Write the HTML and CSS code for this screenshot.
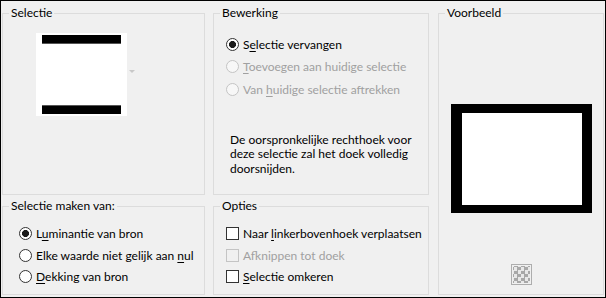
FILE: index.html
```html
<!DOCTYPE html>
<html lang="nl">
<head>
    <meta charset="UTF-8">
    <title>Selectie uit masker</title>
    <link rel="stylesheet" href="styles.css">
</head>
<body>
    <div class="dialog">
        <fieldset class="group source">
            <legend>Selectie</legend>
            <div class="thumb-row">
                <div class="thumb">
                    <div class="bar bar-top"></div>
                    <div class="bar bar-bottom"></div>
                </div>
                <svg class="drop-arrow" width="6" height="4" viewBox="0 0 6 4"><path d="M0 0H6L3 3Z" fill="#c8c8c8"/></svg>
            </div>
        </fieldset>

        <fieldset class="group edit">
            <legend>Bewerking</legend>
            <div class="options">
                <label class="opt"><input type="radio" name="mode" checked><span>S<u>e</u>lectie vervangen</span></label>
                <label class="opt disabled"><input type="radio" name="mode" disabled><span><u>T</u>oevoegen aan huidige selectie</span></label>
                <label class="opt disabled"><input type="radio" name="mode" disabled><span>Van <u>h</u>uidige selectie aftrekken</span></label>
            </div>
            <p class="note">De oorspronkelijke rechthoek voor<br>deze selectie zal het doek volledig<br>doorsnijden.</p>
        </fieldset>

        <fieldset class="group preview">
            <legend>Voorbeeld</legend>
            <div class="preview-frame">
                <div class="preview-inner"></div>
            </div>
            <button class="checker" type="button" aria-label="Transparantie"></button>
        </fieldset>

        <fieldset class="group make">
            <legend>Selectie maken van:</legend>
            <div class="options">
                <label class="opt"><input type="radio" name="src" checked><span>L<u>u</u>minantie van bron</span></label>
                <label class="opt"><input type="radio" name="src"><span>Elke waarde niet gelijk aan <u>n</u>ul</span></label>
                <label class="opt"><input type="radio" name="src"><span><u>D</u>ekking van bron</span></label>
            </div>
        </fieldset>

        <fieldset class="group opts">
            <legend>Opties</legend>
            <div class="options">
                <label class="opt"><input type="checkbox"><span>Naar <u>l</u>inkerbovenhoek verplaatsen</span></label>
                <label class="opt disabled"><input type="checkbox" disabled><span>Af<u>k</u>nippen tot doek</span></label>
                <label class="opt"><input type="checkbox"><span><u>S</u>electie omkeren</span></label>
            </div>
        </fieldset>
    </div>
</body>
</html>
```

FILE: styles.css
```css
html, body {
    margin: 0;
    padding: 0;
    background: #f0f0f0;
}
body {
    font-family: Lato, 'Noto Sans', sans-serif;
    font-size: 12px;
    color: #000;
}
.dialog {
    box-sizing: border-box;
    width: 606px;
    height: 298px;
    border: 1px solid #000;
    padding: 5px 1px 2px 1px;
    display: grid;
    grid-template-columns: 203px 216px 167px;
    grid-template-rows: 189px 96px;
    column-gap: 8px;
    row-gap: 4px;
}
.group {
    margin: 0;
    padding: 0;
    min-width: 0;
    border: 1px solid #dcdcdc;
}
.group legend {
    margin-left: 6px;
    padding: 0 2px;
    line-height: 14px;
}
.source { grid-column: 1; grid-row: 1; }
.edit { grid-column: 2; grid-row: 1; }
.preview {
    grid-column: 3;
    grid-row: 1 / 3;
    margin-left: 1px;
    display: flex;
    flex-direction: column;
    align-items: center;
}
.make { grid-column: 1; grid-row: 2; }
.opts { grid-column: 2; grid-row: 2; }

/* selectie thumbnail */
.thumb-row {
    display: flex;
    align-items: center;
    margin: 13px 0 0 33px;
}
.thumb {
    width: 91px;
    height: 83px;
    background: #fff;
    display: flex;
    flex-direction: column;
    justify-content: space-between;
    align-items: center;
    padding: 2px 0;
    box-sizing: border-box;
}
.bar {
    width: 79px;
    height: 8px;
    background: #000;
}
.bar-top { border-bottom: 1px solid #555; }
.bar-bottom { border-top: 1px solid #555; }
.drop-arrow {
    display: block;
    margin: -6px 0 0 2px;
}

/* radio / checkbox rows */
.options {
    display: flex;
    flex-direction: column;
    margin: 10px 0 0 16px;
}
.edit .options,
.opts .options { margin-left: 12px; }
.edit .options { margin-top: 13px; }
.opt {
    display: flex;
    align-items: center;
    gap: 4px;
    height: 21.5px;
    white-space: nowrap;
}
.edit .opt { height: 22.5px; }
.opt input {
    appearance: none;
    -webkit-appearance: none;
    margin: 0;
    width: 13px;
    height: 13px;
    border: 1px solid #333;
    background: #fff;
    box-sizing: border-box;
    flex: none;
}
.opt input[type=radio] { border-radius: 50%; }
.opt input[type=radio]:checked {
    background: radial-gradient(circle, #1a1a1a 0 3.2px, #fff 3.8px);
}
.opt.disabled { color: #a0a0a0; }
.opt.disabled input {
    border-color: #c4c4c4;
    background: #f7f7f7;
}
.opt.disabled input[type=checkbox] { background: #f0f0f0; }
.opt u { text-underline-offset: 2px; }

.note {
    margin: 32px 0 0 16px;
    line-height: 14.5px;
}

/* voorbeeld */
.preview-frame {
    margin-top: 84px;
    width: 141px;
    height: 109px;
    box-sizing: border-box;
    background: #000;
    padding: 9px 10px 8px 11px;
}
.preview-inner {
    width: 100%;
    height: 100%;
    background: #fff;
}
.checker {
    margin-top: 51px;
    padding: 0;
    width: 21px;
    height: 21px;
    border: 1px solid #adadad;
    background-color: #e8e8e8;
    background-image: conic-gradient(#a8a8a8 25%, #e8e8e8 0 50%, #a8a8a8 0 75%, #e8e8e8 0);
    background-size: 7px 7px;
    background-position: 2px 2px;
    background-clip: content-box;
    box-sizing: border-box;
    outline: 1px solid #f0f0f0;
    outline-offset: -2px;
}
```
